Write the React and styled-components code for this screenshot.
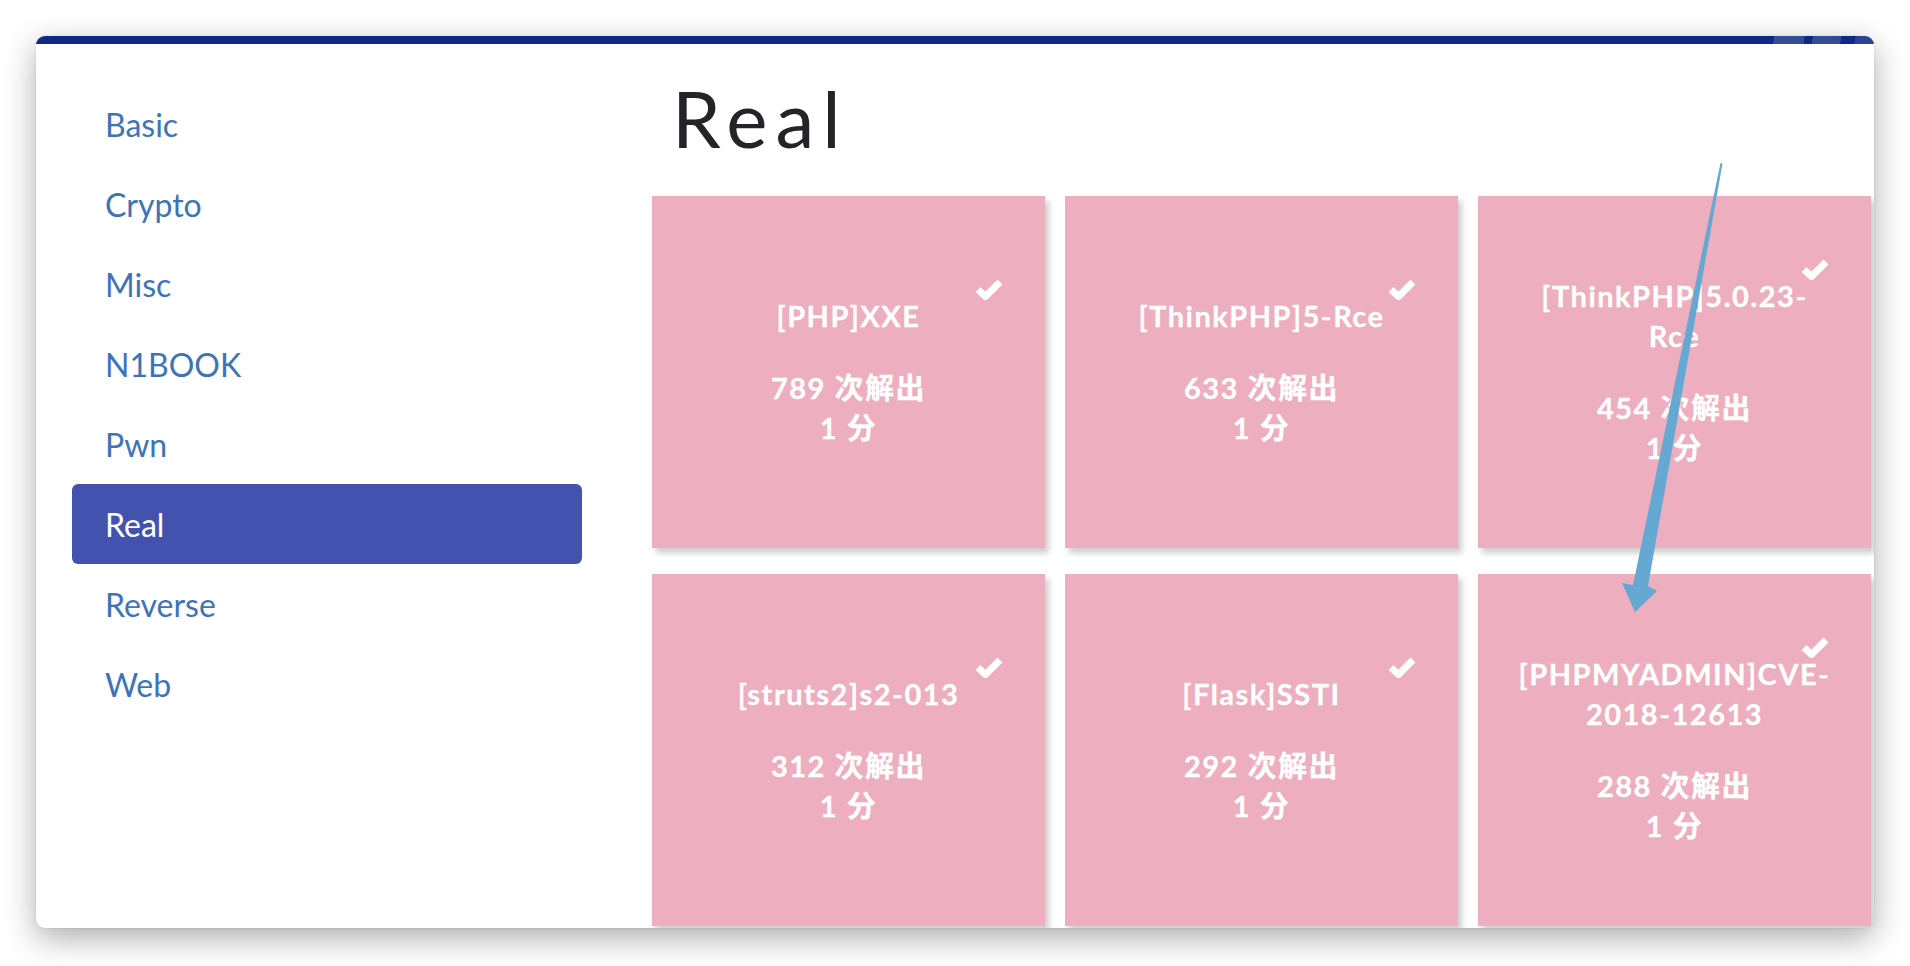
import React from "react";
import styled, { createGlobalStyle } from "styled-components";

const categories = ["Basic", "Crypto", "Misc", "N1BOOK", "Pwn", "Real", "Reverse", "Web"];

const challenges = [
  { name: "[PHP]XXE", solves: 789, value: 1 },
  { name: "[ThinkPHP]5-Rce", solves: 633, value: 1 },
  { name: "[ThinkPHP]5.0.23-Rce", solves: 454, value: 1 },
  { name: "[struts2]s2-013", solves: 312, value: 1 },
  { name: "[Flask]SSTI", solves: 292, value: 1 },
  { name: "[PHPMYADMIN]CVE-2018-12613", solves: 288, value: 1 },
];

const GlobalStyle = createGlobalStyle`
  html, body {
    margin: 0;
    padding: 0;
    background: #ffffff;
    overflow: hidden;
  }
  * {
    box-sizing: border-box;
  }
`;

export default function App() {
  const active = "Real";
  return (
    <Page>
      <GlobalStyle />
      <Window>
        <TopBar />
        <Layout>
          <Sidebar>
            {categories.map((c) => (
              <NavItem key={c} $active={c === active}>
                {c}
              </NavItem>
            ))}
          </Sidebar>
          <Main>
            <Heading>{active}</Heading>
            <Grid>
              {challenges.map((ch) => (
                <Card key={ch.name}>
                  <CardBody>
                    <Solved viewBox="0 0 28 22">
                      <path d="M3 11.5 L10.5 18.5 L25 4" />
                    </Solved>
                    <Title>{ch.name}</Title>
                    <Meta>
                      <div>{ch.solves} 次解出</div>
                      <div>{ch.value} 分</div>
                    </Meta>
                  </CardBody>
                </Card>
              ))}
            </Grid>
          </Main>
        </Layout>
      </Window>
      {/* hand-drawn pointer arrow laid over the page */}
      <Pointer viewBox="0 0 1910 966">
        <polygon points="1720.5,163 1722.5,163.5 1648,586 1657,591 1635,612 1622,583 1633,585" />
      </Pointer>
    </Page>
  );
}

const Page = styled.div`
  position: relative;
  width: 1910px;
  height: 966px;
  padding: 36px;
  font-family: Lato, "Noto Sans CJK SC", sans-serif;
`;

const Window = styled.div`
  height: 892px;
  background: #ffffff;
  border-radius: 9px;
  overflow: hidden;
  box-shadow: 0 10px 32px rgba(0, 0, 0, 0.33), 0 0 0 1px rgba(0, 0, 0, 0.04);
`;

const TopBar = styled.div`
  height: 8px;
  background:
    linear-gradient(
      100deg,
      transparent 0 1712px,
      rgba(255, 255, 255, 0.16) 1712px 1742px,
      transparent 1742px 1750px,
      rgba(255, 255, 255, 0.16) 1750px 1778px,
      transparent 1778px 1792px,
      rgba(255, 255, 255, 0.12) 1792px 1822px,
      transparent 1822px
    ),
    #0e2a80;
`;

const Layout = styled.div`
  display: flex;
  gap: 70px;
  padding-left: 36px;
`;

const Sidebar = styled.nav`
  width: 510px;
  flex-shrink: 0;
  padding-top: 40px;
  display: flex;
  flex-direction: column;
`;

const NavItem = styled.div`
  height: 80px;
  display: flex;
  align-items: center;
  padding-left: 33px;
  border-radius: 6px;
  font-size: 32px;
  color: ${(p) => (p.$active ? "#ffffff" : "#3d74b8")};
  background: ${(p) => (p.$active ? "#4452af" : "transparent")};
`;

const Main = styled.main`
  flex: 1;
  display: flex;
  flex-direction: column;
`;

const Heading = styled.h1`
  margin: 28px 0 30px 20px;
  font-size: 78px;
  font-weight: 400;
  line-height: 1.2;
  letter-spacing: 8px;
  color: #222428;
`;

const Grid = styled.div`
  display: grid;
  grid-template-columns: repeat(3, 393px);
  grid-auto-rows: 352px;
  gap: 26px 20px;
`;

const Card = styled.div`
  display: flex;
  align-items: center;
  justify-content: center;
  padding: 0 40px;
  background: #edaebf;
  box-shadow: 4px 5px 6px rgba(0, 0, 0, 0.2);
  color: #ffffff;
  font-weight: 700;
  font-size: 29px;
  letter-spacing: 1.5px;
  line-height: 40px;
  text-align: center;
  -webkit-text-stroke: 0.3px #ffffff;
`;

const CardBody = styled.div`
  position: relative;
  width: 100%;
`;

const Solved = styled.svg`
  position: absolute;
  top: -18px;
  right: 2px;
  width: 28px;
  height: 22px;
  fill: none;
  stroke: #ffffff;
  stroke-width: 7;
`;

const Title = styled.div``;

const Meta = styled.div`
  margin-top: 32px;
`;

const Pointer = styled.svg`
  position: absolute;
  top: 0;
  left: 0;
  width: 1910px;
  height: 966px;
  pointer-events: none;
  fill: #65a8d2;
`;
